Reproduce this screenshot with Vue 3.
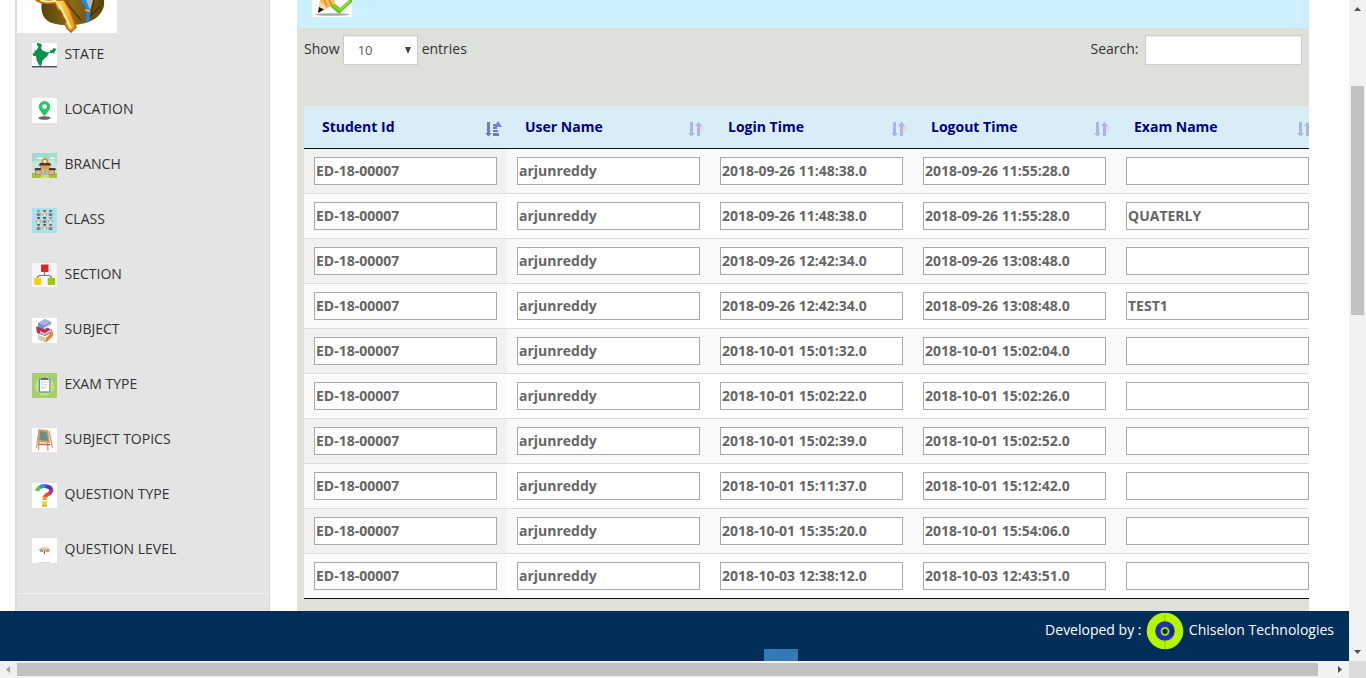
<script setup>
const menu = [
  ['state', 'STATE'], ['location', 'LOCATION'], ['branch', 'BRANCH'], ['class', 'CLASS'],
  ['section', 'SECTION'], ['subject', 'SUBJECT'], ['exam', 'EXAM TYPE'],
  ['topics', 'SUBJECT TOPICS'], ['qtype', 'QUESTION TYPE'], ['qlevel', 'QUESTION LEVEL'],
]
const columns = ['Student Id', 'User Name', 'Login Time', 'Logout Time', 'Exam Name']
const sessions = [
  ['2018-09-26 11:48:38.0', '2018-09-26 11:55:28.0', ''],
  ['2018-09-26 11:48:38.0', '2018-09-26 11:55:28.0', 'QUATERLY'],
  ['2018-09-26 12:42:34.0', '2018-09-26 13:08:48.0', ''],
  ['2018-09-26 12:42:34.0', '2018-09-26 13:08:48.0', 'TEST1'],
  ['2018-10-01 15:01:32.0', '2018-10-01 15:02:04.0', ''],
  ['2018-10-01 15:02:22.0', '2018-10-01 15:02:26.0', ''],
  ['2018-10-01 15:02:39.0', '2018-10-01 15:02:52.0', ''],
  ['2018-10-01 15:11:37.0', '2018-10-01 15:12:42.0', ''],
  ['2018-10-01 15:35:20.0', '2018-10-01 15:54:06.0', ''],
  ['2018-10-03 12:38:12.0', '2018-10-03 12:43:51.0', ''],
]
const rows = sessions.map(s => ['ED-18-00007', 'arjunreddy', ...s])
const hair = ['#7aa0b0', '#c0392b', '#8a4b2a', '#a03020', '#354060', '#8a8a90', '#7a5030', '#8b3a20', '#9a5a3a']
</script>

<template>
  <div class="window">
    <div class="page">
      <div class="body">
        <aside class="sidebar">
          <div class="logo">
            <svg width="100" height="33" viewBox="0 0 100 33">
              <defs>
                <linearGradient id="suit" x1="0" x2="1"><stop offset="0" stop-color="#5a4306" /><stop offset=".5" stop-color="#8a6a1c" /><stop offset="1" stop-color="#59430a" /></linearGradient>
                <linearGradient id="key" x1="0" x2="1"><stop offset="0" stop-color="#f39a12" /><stop offset=".5" stop-color="#ffe06a" /><stop offset="1" stop-color="#ee900c" /></linearGradient>
              </defs>
              <path d="M25 0C23 12 26 20 35 23C48 27 68 26 79 18C85 13 88 7 87 0Z" fill="url(#suit)" />
              <path d="M66 0L72 14L76 0Z" fill="#b9b6bb" />
              <path d="M64 0L70 10L68.500 22L72.500 21L73 10L69 0Z" fill="#1787f5" />
              <path d="M68 9l5 1v2l-5-1z" fill="#f0a818" />
              <path d="M47 0L64 20M77 0L74 16L83 6" fill="none" stroke="#463204" stroke-width="1.2" />
              <path d="M19 0C22 3 30 4 38 3L41 9L45 12L46 17L50 20L48 23L50 28L54 32L59 27L53 10L47 0Z" fill="url(#key)" stroke="#bd6405" stroke-width="1.5" />
              <path d="M23 0Q33 3 39 0" fill="none" stroke="#fff4b8" stroke-width="1.5" />
              <path d="M42 4L54 28" stroke="#fff0a0" stroke-width="2" />
            </svg>
          </div>
          <nav class="menu">
            <a v-for="[icon, label] in menu" :key="label" class="item">
              <svg class="icon" width="25" height="25" viewBox="0 0 25 25">
                <rect v-if="icon !== 'section'" width="25" height="25" fill="#fff" />
                <g v-if="icon === 'state'">
                  <path d="M5 0L8.500 .5L10 2L9 5L10.500 7.500L15 9.300H18V7.500L20 7L22 5L24.500 6L23 8L22 11L20.500 9.500L19 10.500L18 9.800L16 11L15.500 13L13 15L10.500 17.500L9.500 22L8 23.500L6 20L4.500 17L4 13L1.500 13L.5 10.500L3 9.500L2 8L4.500 7L6.500 4L5 2Z" fill="#079348" />
                  <path d="M0 23.8H25" stroke="#303050" stroke-width="1.3" />
                </g>
                <g v-else-if="icon === 'location'">
                  <ellipse cx="12.500" cy="20" rx="6" ry="1.7" fill="#66666b" />
                  <path fill-rule="evenodd" d="M12.500 3A5.700 5.700 0 0 0 6.800 8.700C6.800 12.500 12.500 18 12.500 18S18.200 12.500 18.200 8.700A5.700 5.700 0 0 0 12.500 3ZM12.500 6.200a2.400 2.400 0 1 1 0 4.800 2.400 2.400 0 0 1 0-4.800" fill="#25c76d" />
                </g>
                <g v-else-if="icon === 'branch'">
                  <rect width="25" height="25" fill="#a0dccd" /><path d="M0 9Q5 7 10 8Q20 5 25 9V21H0Z" fill="#cbe6d4" />
                  <path d="M5 4.500h6v1.500H5zM18 4.500h5v1.500h-5z" fill="#f2faf5" />
                  <path d="M0 20H25V25H0Z" fill="#9fc63b" /><path d="M10 22H16L18 25H8Z" fill="#cfdc68" />
                  <path d="M3 16H23V22H3Z" fill="#d97b28" /><path d="M8 12H18V22H8Z" fill="#eb9c43" />
                  <path d="M9 10L10 7Q13 3 16 7L17 10Z" fill="#e38b30" /><rect x="11.500" y="7" width="2.500" height="3" fill="#e8eff0" />
                  <path d="M8 10H18L19.500 12.500H6.500ZM3.500 15H9V17H2ZM17 15H23L24.500 17H17Z" fill="#3e3d45" />
                  <path d="M10.500 16H15.500V22H10.500ZM4 18H8V21H4ZM18 18H22V21H18Z" fill="#9acbd4" /><path d="M13 16V22" stroke="#d97b28" stroke-width=".7" />
                </g>
                <g v-else-if="icon === 'class'">
                  <rect width="25" height="25" fill="#a4e4f1" />
                  <g v-for="(c, i) in hair" :key="i">
                    <rect :x="5.300 + (i % 3) * 6" :y="2 + Math.floor(i / 3) * 7" width="2.600" height="2" :fill="c" />
                    <rect :x="5.600 + (i % 3) * 6" :y="3.600 + Math.floor(i / 3) * 7" width="2" height="1.600" fill="#e8b48c" />
                    <rect :x="4.300 + (i % 3) * 6" :y="5.200 + Math.floor(i / 3) * 7" width="4.600" height="2.500" fill="#c9997e" />
                    <rect :x="5.500 + (i % 3) * 6" :y="5.500 + Math.floor(i / 3) * 7" width="2" height="2.500" :fill="i % 2 ? '#eef5f5' : '#596c8c'" />
                  </g>
                </g>
                <g v-else-if="icon === 'section'">
                  <rect width="25" height="24" rx="1.500" fill="#f7f7f7" />
                  <path d="M12.500 9V12.500M5.500 15Q5.500 12.500 8 12.500H17Q19.500 12.500 19.500 15" fill="none" stroke="#777" stroke-width="1.200" />
                  <rect x="9" y="1.500" width="7.500" height="7.500" rx=".8" fill="#d9282b" />
                  <rect x="2" y="14.700" width="7.300" height="7.300" rx=".8" fill="#fccd16" />
                  <rect x="15.700" y="14.700" width="7.300" height="7.300" rx=".8" fill="#99cc08" />
                </g>
                <g v-else-if="icon === 'subject'">
                  <path d="M6 17L14 20L21 13V18L14 24.500L6 21Z" fill="#e58a20" /><path d="M6 17L14 20V24L6 21Z" fill="#d6cbbd" />
                  <path d="M4 9L11 7L20 12L19 15L13 18L5 15Z" fill="#b93458" /><path d="M8 13L13 15L19 11V14L13 17.500L8 15.500Z" fill="#c9bcc4" />
                  <path d="M6 5L13 1L19 4L18.500 8L12 11L6 9Z" fill="#7b93c9" /><path d="M6 5L13 1L19 4L12 7.500Z" fill="#a5b6e1" /><path d="M12 9.500L18.500 6V8L12 11.500Z" fill="#e8e8ef" />
                </g>
                <g v-else-if="icon === 'exam'">
                  <rect width="25" height="25" fill="#a6ce6b" /><circle cx="12.500" cy="13" r="9.500" fill="#c6de88" />
                  <rect x="7.400" y="6" width="10.500" height="13" fill="#fff" stroke="#469c9b" stroke-width="1.200" />
                  <path d="M9 7V5H11Q12.500 3.500 14 5H16V7Z" fill="#696779" /><path d="M9 9H16M9 11L15 11.500M9 14H13M10 16L15 13" stroke="#bbb" stroke-width=".7" />
                  <path d="M19 9V18" stroke="#e7c641" stroke-width="1.200" />
                </g>
                <g v-else-if="icon === 'topics'">
                  <path d="M7 2L4.500 20M17 3L20.500 20M14.500 3L16 23M7.500 2L6.500 22" stroke="#d7a06d" stroke-width="1.300" />
                  <path d="M6.500 1L16 2L18 15L6 14Z" fill="#d99c69" /><path d="M8 3L14.500 4L16.500 13L7.500 12Z" fill="#65938b" />
                  <path d="M6 15.500L18 16V17.500L6 17Z" fill="#d55d49" /><path d="M0 24.500H25" stroke="#fae1e3" />
                </g>
                <g v-else-if="icon === 'qtype'" fill="none" stroke-width="4">
                  <path d="M5 8Q5.500 5.500 8 4.500" stroke="#62c832" /><path d="M7.500 4.500Q10 2.500 14 3.200" stroke="#2196df" />
                  <path d="M13.500 3.200Q18.500 3.500 19.500 7" stroke="#6432ba" /><path d="M19.500 6.500Q19 9.500 17 11" stroke="#c72788" />
                  <path d="M17.500 10.500Q13.500 12 12.700 14.500" stroke="#f04435" /><path d="M12.700 13.500V17" stroke="#f89a27" />
                  <path d="M10 18.200H15V23.500H10Z" fill="#ecd735" stroke="none" /><path d="M10 23H15" stroke="#b9a02c" stroke-width="1" />
                </g>
                <g v-else>
                  <path d="M6 11Q12.500 6 19 11L18 13L15 11.500L12.500 12L10 11.500L7 13Z" fill="#e6d9ca" />
                  <circle cx="9.500" cy="12.600" r="1.700" fill="#58b6a4" /><circle cx="12.500" cy="12" r="1.600" fill="#eeb548" /><circle cx="15.500" cy="12.600" r="1.700" fill="#e77978" />
                  <path d="M12.500 13V16" stroke="#555" /><path d="M7 24.500H18" stroke="#ddd" />
                </g>
              </svg>
              <span>{{ label }}</span>
            </a>
          </nav>
        </aside>

        <main class="panel">
          <header class="panel-head">
            <svg width="40" height="17" viewBox="0 0 40 17">
              <rect width="40" height="17" fill="#fff" />
              <ellipse cx="20" cy="14.500" rx="17" ry="1.300" fill="#aaa" />
              <path d="M8 0L6 13L23 4L22 0Z" fill="#f4bd55" /><path d="M8 2L6 13L14 8L12 5Z" fill="#f5dca4" /><path d="M7 7L6 13L12 9.500Z" fill="#15151a" /><path d="M12 0L15 6M17 0L20 5" stroke="#dd8a17" stroke-width="1.500" />
              <path d="M18 6L23 4L28 8L37 0H40V2L27 14Z" fill="#69c31b" /><path d="M22 6L28 10L38 1" fill="none" stroke="#99df39" stroke-width="1.500" />
            </svg>
          </header>
          <div class="tools">
            <label class="length">Show
              <span class="select">10 <svg width="6" height="6" viewBox="0 0 6 6"><path d="M0 0H6L3.500 6H2.500Z" fill="#444" /></svg></span>
              entries</label>
            <label class="search">Search: <input type="text"></label>
          </div>
          <div class="table-wrap">
            <table>
              <thead>
                <tr>
                  <th v-for="(c, i) in columns" :key="c">
                    <div class="th">
                      <span>{{ c }}</span>
                      <svg v-if="i === 0" width="17" height="16" viewBox="0 0 17 16">
                        <path d="M2 1H5V12H7L3.500 15.500L0 12H2Z" fill="#7078c5" />
                        <path d="M8 3H11V5H8ZM8 6H12V8H8ZM8 9H13V11H8ZM8 12H14V15H8Z" fill="#7078c5" /><path d="M9 6L13 0L17 6Z" fill="#7880da" />
                      </svg>
                      <svg v-else width="17" height="16" viewBox="0 0 17 16">
                        <path d="M12 2L17 7L12 13Z" fill="#e2d9e1" />
                        <path d="M2 1H5V12H7L3.500 15.500L0 12H2ZM9 15V5H7L10.500 1L14 5H12V15Z" fill="#aab6df" />
                      </svg>
                    </div>
                  </th>
                </tr>
              </thead>
              <tbody>
                <tr v-for="(r, i) in rows" :key="i">
                  <td v-for="(v, j) in r" :key="j"><input type="text" :value="v"></td>
                </tr>
              </tbody>
            </table>
          </div>
        </main>
      </div>

      <footer class="footer">
        <div class="credit">
          <span>Developed by :</span>
          <svg width="38" height="38" viewBox="0 0 38 38">
            <circle cx="19" cy="19" r="18.300" fill="#b5f500" /><path d="M19 1V10M19 28V37" stroke="#8cc000" stroke-width=".8" />
            <circle cx="19" cy="19" r="9.800" fill="#2230b8" /><path d="M22 13Q29 14 28 21L23 25Q26 19 22 13Z" fill="#102c70" />
            <circle cx="19" cy="19.300" r="3.500" fill="#102c4c" stroke="#a5e600" stroke-width="1.800" />
          </svg>
          <span>Chiselon Technologies</span>
        </div>
        <div class="to-top"></div>
      </footer>
    </div>

    <div class="vbar">
      <svg width="17" height="17" viewBox="0 0 17 17"><path d="M5 11L8.500 7L12 11Z" fill="#505050" /></svg>
      <div class="vtrack"><div class="vthumb"></div></div>
      <svg width="17" height="17" viewBox="0 0 17 17"><path d="M5 6L8.500 10L12 6Z" fill="#505050" /></svg>
    </div>
    <div class="hbar">
      <svg width="17" height="17" viewBox="0 0 17 17"><path d="M10 5L6 8.500L10 12Z" fill="#a3a3a3" /></svg>
      <div class="hthumb"></div>
      <svg width="17" height="17" viewBox="0 0 17 17"><path d="M6 5L10 8.500L6 12Z" fill="#505050" /></svg>
    </div>
    <div class="corner"></div>
  </div>
</template>

<style>
body { margin: 0; overflow: hidden; }
</style>

<style scoped>
* { box-sizing: border-box; }
svg { display: block; flex: none; }
.window { display: grid; grid-template: 661px 17px / 1349px 17px; width: 1366px; height: 678px; overflow: hidden; background: #fff; font: 14px/20px "Open Sans", "Noto Sans", sans-serif; color: #333; }
.page { display: flex; flex-direction: column; overflow: hidden; }
.body { display: flex; gap: 27px; height: 611px; padding-left: 15px; overflow: hidden; }
.sidebar { width: 255px; flex: none; height: 611px; background: #e4e4e4; border-left: 2px solid #dcdcdc; border-right: 1px solid #d8d8d8; }
.logo { width: 100px; height: 33px; background: #fff; }
.menu { height: 561px; padding: 10px 0 0 15px; border-bottom: 1px solid #efefef; }
.item { display: flex; height: 55px; align-items: flex-start; gap: 7.500px; color: #333; }
.item span { margin-top: 1px; }
.panel { width: 1012px; flex: none; background: #dee1da; overflow: hidden; }
.panel-head { height: 28px; padding-left: 15px; background: #ccf0ff; }
.tools { display: flex; justify-content: space-between; height: 78px; padding: 7px 7px 0; }
.tools label { display: flex; align-items: flex-start; line-height: 27px; }
.length { gap: 4px; }
.search { gap: 6.500px; }
.select { display: flex; justify-content: space-between; align-items: center; width: 75px; height: 30px; margin-left: -.9px; padding: 0 6px 0 14px; background: #fff; border: 1px solid #ccc; color: #555; font-size: 13px; box-shadow: inset 0 1px 1px rgba(0, 0, 0, .075); }
.search input { width: 157px; height: 30px; border: 1px solid #ccc; background: #fff; box-shadow: inset 0 1px 1px rgba(0, 0, 0, .075); }
.table-wrap { margin-left: 7px; overflow: hidden; }
table { width: 1015px; table-layout: fixed; border-collapse: separate; border-spacing: 0; border-bottom: 1px solid #111; }
th { height: 43px; padding: 0 5px 0 18px; background: #d9edf7; border-bottom: 1px solid #111; color: navy; text-align: left; font-weight: 700; }
.th { display: flex; justify-content: space-between; align-items: center; height: 42px; }
.th svg { margin-top: 3px; }
td { padding: 8px 10px; border-top: 1px solid #ddd; background: #fff; }
tr:first-child td { border-top: 0; }
tr:nth-child(odd) td { background: #f9f9f9; }
td:first-child { background: #fafafa; }
tr:nth-child(odd) td:first-child { background: #f1f1f1; }
td input { display: block; width: 183px; height: 28px; padding: 0 1px 2px; border: 1px solid #a9a9a9; background: #fff; color: #666; font: 700 14px/20px "Open Sans", "Noto Sans", sans-serif; }
.footer { display: flex; flex-direction: column; justify-content: space-between; height: 50px; background: #002e5b; color: #fff; }
.credit { display: flex; justify-content: flex-end; align-items: center; gap: 4.700px; height: 38px; padding: 1px 15px 0 0; }
.credit span { margin-bottom: 2px; }
.to-top { width: 34px; height: 12px; margin-left: 764px; background: #337ab7; }
.vbar { display: flex; flex-direction: column; background: #f1f1f1; }
.vtrack { flex: 1; padding: 69px 1px 0 2px; }
.vthumb { width: 13px; height: 229px; background: #c1c1c1; }
.hbar { display: flex; align-items: center; justify-content: space-between; background: #f1f1f1; }
.hthumb { width: 1301px; height: 13px; margin-right: auto; background: #c1c1c1; }
.corner { background: #dcdcdc; }
</style>
